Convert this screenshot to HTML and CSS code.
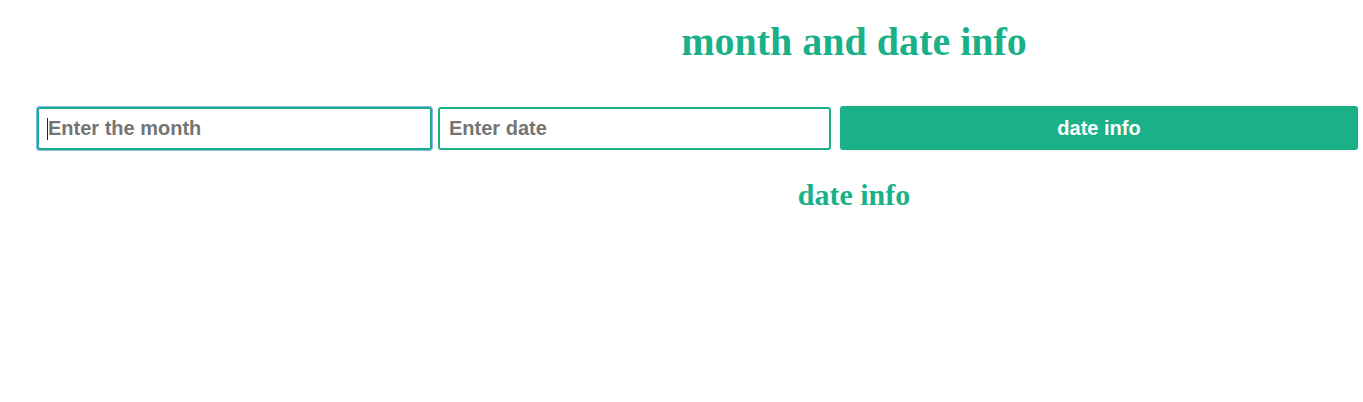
FILE: index.html
```html
<!DOCTYPE html>
<html>
<head>
<meta charset="utf-8">
<title>month and date info</title>
<link rel="stylesheet" href="styles.css">
</head>
<body>
<h1 class="title">month and date info</h1>
<form class="row">
  <div class="field field-month">
    <input class="input input-focused" type="text" placeholder="Enter the month">
    <span class="caret"></span>
  </div>
  <div class="field field-date">
    <input class="input" type="text" placeholder="Enter date">
  </div>
  <button class="btn" type="button">date info</button>
</form>
<h2 class="result">date info</h2>
</body>
</html>
```
FILE: styles.css
```css
html, body {
  margin: 0;
  padding: 0;
  background: #ffffff;
}
body {
  font-family: "Liberation Serif", "Times New Roman", serif;
}
.title {
  margin: 19px 0 0 0;
  padding-left: 345px;
  text-align: center;
  font-family: "Liberation Serif", "Times New Roman", serif;
  font-weight: bold;
  font-size: 40px;
  line-height: 46px;
  color: #1bb188;
}
.row {
  display: flex;
  align-items: center;
  margin: 41px 0 0 0;
  padding: 0 5px 0 37px;
}
.field {
  position: relative;
  display: flex;
}
.field-month {
  width: 395px;
  margin-right: 6px;
}
.field-date {
  width: 393px;
  margin-right: 9px;
}
.input {
  box-sizing: border-box;
  width: 100%;
  height: 43px;
  margin: 0;
  padding: 0 9px;
  border: 2px solid #1bb188;
  border-radius: 3px;
  background: #ffffff;
  outline: none;
  font-family: "Liberation Sans", Arial, sans-serif;
  font-weight: bold;
  font-size: 20px;
  color: #333333;
}
.input::placeholder {
  color: #757575;
  opacity: 1;
}
.input-focused {
  box-shadow: 0 0 0 1px #8ab4f8;
}
.caret {
  position: absolute;
  left: 10px;
  top: 11px;
  width: 1px;
  height: 22px;
  background: #222222;
}
.btn {
  flex: 1;
  height: 44px;
  margin: 0;
  border: none;
  border-radius: 3px;
  background: #1bb188;
  color: #ffffff;
  font-family: "Liberation Sans", Arial, sans-serif;
  font-weight: bold;
  font-size: 20px;
  cursor: pointer;
}
.result {
  margin: 28px 0 0 0;
  padding-left: 345px;
  text-align: center;
  font-family: "Liberation Serif", "Times New Roman", serif;
  font-weight: bold;
  font-size: 30px;
  line-height: 34px;
  color: #1bb188;
}
```
